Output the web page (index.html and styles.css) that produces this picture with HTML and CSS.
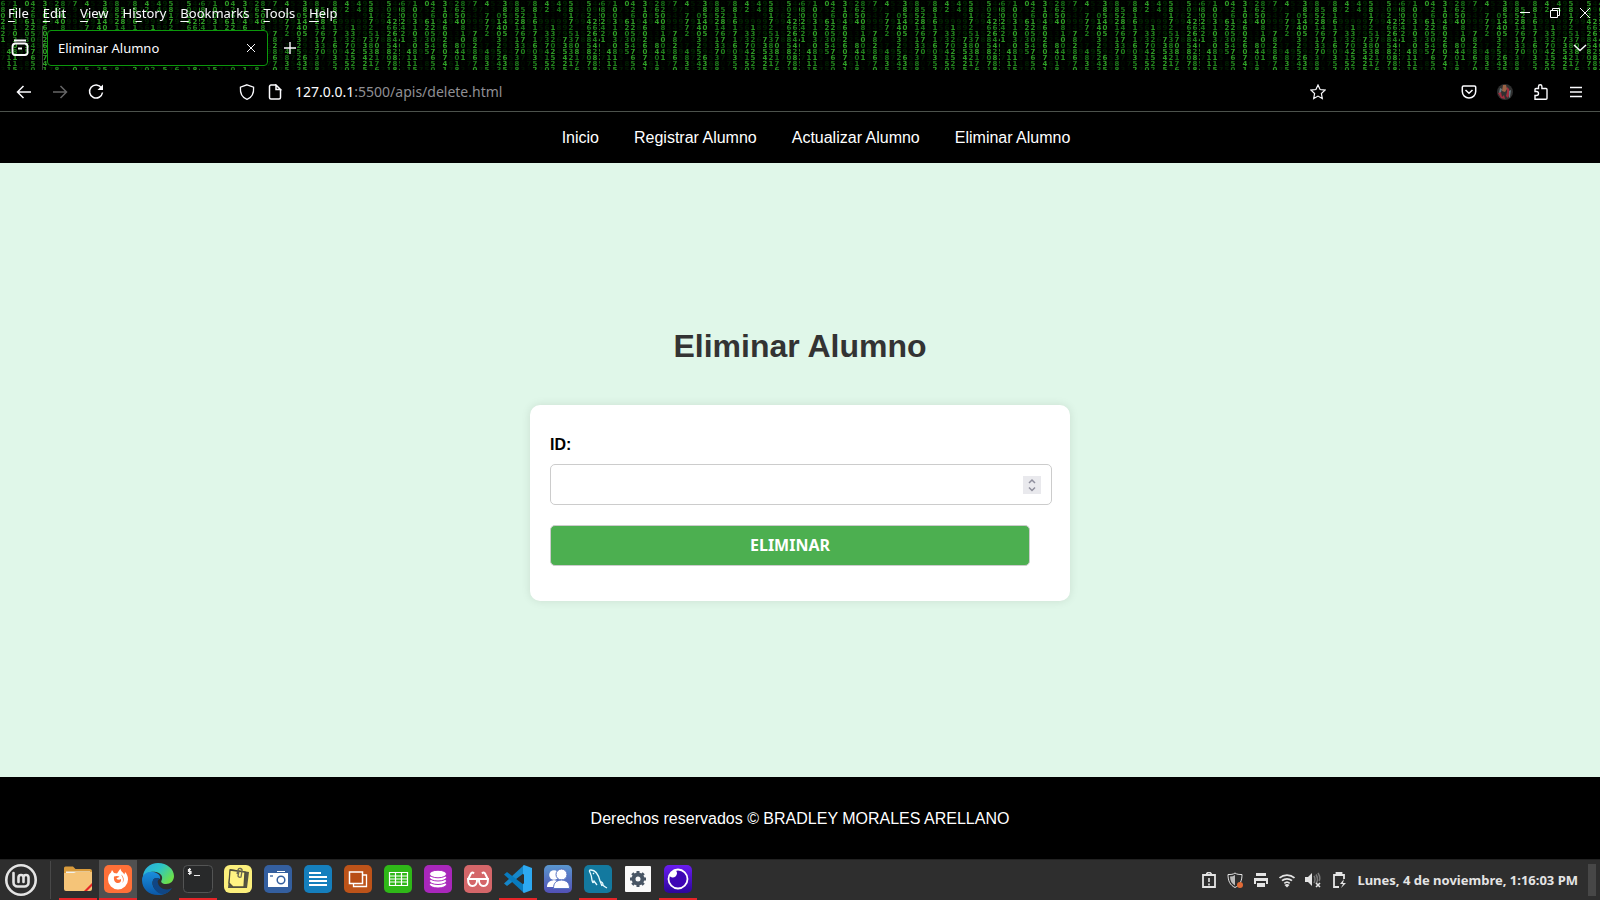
FILE: index.html
```html
<!DOCTYPE html>
<html lang="es">
<head>
<meta charset="utf-8">
<title>Eliminar Alumno</title>
<link rel="stylesheet" href="styles.css">
</head>
<body>
<header class="browser">
  <div class="theme">
    <canvas class="rain" aria-hidden="true"></canvas>
    <div class="menubar">
      <nav class="menus">
        <button><u>F</u>ile</button><button><u>E</u>dit</button><button><u>V</u>iew</button><button>Hi<u>s</u>tory</button><button><u>B</u>ookmarks</button><button><u>T</u>ools</button><button><u>H</u>elp</button>
      </nav>
      <div class="window-controls">
        <button aria-label="Minimize"><svg width="12" height="12" viewBox="0 0 12 12"><path d="M1 5.500h10"/></svg></button>
        <button aria-label="Restore"><svg width="12" height="12" viewBox="0 0 12 12"><path d="M1.500 3.500h7v7h-7zM3.500 3.500v-2h7v7h-2"/></svg></button>
        <button aria-label="Close"><svg width="12" height="12" viewBox="0 0 12 12"><path d="M1 1l10 10M11 1L1 11"/></svg></button>
      </div>
    </div>
    <div class="tabs">
      <button class="view" aria-label="Firefox View"><svg width="18" height="18" viewBox="0 0 18 18"><path stroke-width="1.800" d="M3 1.500h12M4 4.500h10a3 3 0 0 1 2.500 3v6a2.500 2.500 0 0 1-2.500 2.500H4A2.500 2.500 0 0 1 1.500 13.500v-6A3 3 0 0 1 4 4.500zM7 9.500h4"/></svg></button>
      <div class="tab"><span>Eliminar Alumno</span><button aria-label="Close tab"><svg width="10" height="10" viewBox="0 0 10 10"><path d="M1 1l8 8M9 1L1 9"/></svg></button></div>
      <button class="new-tab" aria-label="New tab"><svg width="14" height="14" viewBox="0 0 14 14"><path stroke-width="1.400" d="M7 1v12M1 7h12"/></svg></button>
      <button class="all-tabs" aria-label="List all tabs"><svg width="14" height="8" viewBox="0 0 14 8"><path stroke-width="1.500" d="M1 1l6 5.500L13 1"/></svg></button>
    </div>
  </div>
  <div class="toolbar">
    <div class="history">
      <button aria-label="Back"><svg width="16" height="16" viewBox="0 0 16 16"><path stroke-width="1.500" d="M15 8H1.500M7.500 2L1.500 8l6 6"/></svg></button>
      <button class="off" aria-label="Forward"><svg width="16" height="16" viewBox="0 0 16 16"><path stroke-width="1.500" d="M1 8h13.500M8.500 2l6 6-6 6"/></svg></button>
      <button aria-label="Reload"><svg width="16" height="16" viewBox="0 0 16 16"><path stroke-width="1.500" d="M13.500 4A6.500 6.500 0 1 0 14.500 8.500"/><path fill="currentColor" stroke="none" d="M15 .500v5.500H9.500z"/></svg></button>
    </div>
    <div class="address">
      <svg width="16" height="16" viewBox="0 0 16 16"><path stroke-width="1.300" d="M8 .800L14.600 3.200C15 9 13 13.500 8 15.300 3 13.500 1 9 1.400 3.200z"/></svg>
      <svg width="16" height="16" viewBox="0 0 16 16"><path stroke-width="1.500" d="M9 1H4a1.500 1.500 0 0 0-1.500 1.500v11A1.500 1.500 0 0 0 4 15h8a1.500 1.500 0 0 0 1.500-1.500V5.500zM9 1v4.500h4.500z"/></svg>
      <span class="url"><b>127.0.0.1</b>:5500/apis/delete.html</span>
      <button class="star" aria-label="Bookmark this page"><svg width="16" height="16" viewBox="0 0 16 16"><path stroke-width="1.200" d="M8 1l2.100 4.500 4.900.600-3.600 3.400.900 5L8 12.100 3.700 14.500l.900-5L1 6.100l4.900-.600z"/></svg></button>
    </div>
    <div class="tools">
      <button aria-label="Pocket"><svg width="16" height="16" viewBox="0 0 16 16"><path stroke-width="1.500" d="M2.500 2h11a1.200 1.200 0 0 1 1.200 1.200V7.500a6.700 6.500 0 0 1-13.400 0V3.200A1.200 1.200 0 0 1 2.500 2zM4.500 6L8 9.300 11.500 6"/></svg></button>
      <button aria-label="Account"><svg width="16" height="16" viewBox="0 0 16 16"><g stroke="none"><circle cx="8" cy="8" r="8" fill="#303030"/><path fill="#9c6245" d="M6 1h3l1 4-2 3-3-1z"/><path fill="#a12d3d" d="M1 9l3-1 1 5 2-2 1 4-4-1zM10 3l2 2 1 4-2 5-2-2 1-4z"/><path fill="#687b80" d="M3 4l2 1-1 3-2 1zM12 7l2-1-1 7-1 1z"/></g></svg></button>
      <button aria-label="Extensions"><svg width="16" height="16" viewBox="0 0 16 16"><path stroke-width="1.400" d="M2 15.200V11.500H3.500a2 2 0 0 0 0-4H2V5.500A1 1 0 0 1 3 4.500H5.500V2.500a1.700 1.700 0 0 1 3.400 0v2H13a1 1 0 0 1 1 1V14.200a1 1 0 0 1-1 1z"/></svg></button>
      <button aria-label="Application menu"><svg width="14" height="12" viewBox="0 0 14 12"><path stroke-width="1.500" d="M1 1.500h12M1 6h12M1 10.500h12"/></svg></button>
    </div>
  </div>
</header>

<nav class="site-nav">
  <a href="#">Inicio</a><a href="#">Registrar Alumno</a><a href="#">Actualizar Alumno</a><a href="#">Eliminar Alumno</a>
</nav>
<main class="content">
  <h1>Eliminar Alumno</h1>
  <form class="card">
    <label for="id">ID:</label>
    <div class="field">
      <input id="id" type="number">
      <svg class="spinner" width="18" height="18" viewBox="0 0 18 18"><path d="M6 7l3-3 3 3M6 11.500l3 3 3-3"/></svg>
    </div>
    <button class="submit" type="button">ELIMINAR</button>
  </form>
</main>
<footer class="site-footer">Derechos reservados © BRADLEY MORALES ARELLANO</footer>

<div class="taskbar">
  <button class="mint" aria-label="Menu"><svg width="34" height="34" viewBox="0 0 34 34"><circle cx="17" cy="17" r="14.700" stroke="#e4e4e4" stroke-width="2.600"/><path stroke="#e4e4e4" stroke-width="2.600" stroke-linecap="round" d="M9.500 10v9.500a4 4 0 0 0 4 4h7a4 4 0 0 0 4-4V14.500a2.500 2.500 0 0 0-5 0v4.500M19.500 14.500a2.500 2.500 0 0 0-5 0v4.500"/></svg></button>
  <div class="apps">
    <button class="app open" aria-label="Files"><svg width="28" height="28" viewBox="0 0 28 28"><path fill="#d99b3c" d="M0 3a1.500 1.500 0 0 1 1.500-1.500H9L11.500 4H26a2 2 0 0 1 2 2v18H0z"/><path fill="#f2f2ec" d="M2 6.500h24v4H2z"/><path fill="#f5c478" d="M0 8h10l2-1h16v17a2 2 0 0 1-2 2H2a2 2 0 0 1-2-2z"/><path fill="#e52527" d="M28 18v3l-5 5h-3z"/></svg></button>
    <button class="app open active" aria-label="Firefox"><svg width="28" height="28" viewBox="0 0 28 28"><rect width="28" height="28" rx="5" fill="#ff7038"/><path fill="#fff" d="M8 5l2 3 3 .500L16.500 3.500c0 3 2.500 3.500 4 6l.500-2.500c2 2 3 4.500 3 7.500A10 10 0 0 1 4 14.500c0-3.500 1-5.500 3-7z"/><path fill="#ff7038" d="M10 11.500q3-1 5.500 0c-1 1.500-3 1-3 2 1 1.500 3 1.500 4.500.500.500 2.500-1 4-3 4-3 0-4.500-2.500-4-6.500zM17 9.500c3 2 3.500 6 1.500 8.500 1-3 .500-6-1.500-8.500z"/></svg></button>
    <button class="app" aria-label="Edge"><svg width="32" height="32" viewBox="0 0 32 32"><defs><linearGradient id="edge-a" x1="0" y1="0" x2="1" y2=".600"><stop offset="0" stop-color="#2aa9e0"/><stop offset=".500" stop-color="#2cc4c8"/><stop offset="1" stop-color="#6be04c"/></linearGradient><linearGradient id="edge-b" x1="0" y1="0" x2="0" y2="1"><stop offset="0" stop-color="#1a8fdc"/><stop offset="1" stop-color="#0b58a8"/></linearGradient></defs><path fill="url(#edge-a)" d="M1 14C1 6 8 0 16 0c9 0 16 6 16 13 0 5-3.500 8-8 8-4 0-5.500-2-4.500-3.500C21.500 14 19 10 14 9 8 8 3 11 1 14z"/><path fill="url(#edge-b)" d="M0 17c0-6 6-9 11-8 5 .500 8 4 7 7-5-3-9 1-7 7 3 7 12 8 18 3-3 4-7 6-13 6C7 32 0 26 0 17z"/><path fill="#104684" d="M11 17c-2 7 4 15 11 14 4-1 7-4 8-6-5 3-13 1-14-5-1-2 1-4 2-4-3-2-6-1-7 1z"/></svg></button>
    <button class="app open" aria-label="Terminal"><svg width="30" height="28" viewBox="0 0 30 28"><rect x=".500" y=".500" width="29" height="27" rx="4" fill="#28292a" stroke="#535454"/><path stroke="#eee" stroke-width="1.200" d="M8 4.500H5.500v2H8v2H5M6.700 3v7M11 10.500h6"/></svg></button>
    <button class="app" aria-label="Notes"><svg width="28" height="28" viewBox="0 0 28 28"><rect width="28" height="28" rx="6" fill="#fbef7c"/><path fill="#555444" d="M6 4l19 3-2 16H4z"/><path fill="#fff383" stroke="#4e4d3c" stroke-width="1.300" d="M6 5l15 2-1 15H9l-4-4z"/><path stroke="#6b6954" stroke-width="1.300" d="M13 9l1-4a2 2 0 0 1 4 1l-1 6a2 2 0 0 1-3-1l1-5"/></svg></button>
    <button class="app" aria-label="Screenshot"><svg width="28" height="28" viewBox="0 0 28 28"><rect width="28" height="28" rx="5" fill="#345f9f"/><path fill="#fff" d="M13 6h8v1h-8zM4 8h20v14H4z"/><path stroke="#345f9f" stroke-width="1.300" d="M6 11h3"/><circle cx="17" cy="15" r="3.800" stroke="#345f9f" stroke-width="1.500"/></svg></button>
    <button class="app" aria-label="Text editor"><svg width="28" height="28" viewBox="0 0 28 28"><rect width="28" height="28" rx="5" fill="#157fbd"/><path stroke="#fff" stroke-width="2" d="M5 8h12M5 12h18M5 16h18M5 20h18"/></svg></button>
    <button class="app" aria-label="Windows"><svg width="28" height="28" viewBox="0 0 28 28"><rect width="28" height="28" rx="5" fill="#bd5319"/><path stroke="#fff" stroke-width="1.300" d="M9.500 10h13v11.500h-13z"/><path fill="#b84d15" stroke="#fff" stroke-width="1.500" d="M5.500 7h13v11.500h-13z"/></svg></button>
    <button class="app" aria-label="Spreadsheet"><svg width="28" height="28" viewBox="0 0 28 28"><rect width="28" height="28" rx="5" fill="#2fb818"/><path stroke="#fff" stroke-width="1.200" d="M5.500 7.500h18v13h-18zM5.500 11h18M5.500 14h18M5.500 17h18M11.500 7.500v13M17.500 7.500v13"/></svg></button>
    <button class="app" aria-label="Database"><svg width="28" height="28" viewBox="0 0 28 28"><rect width="28" height="28" rx="5" fill="#a927bb"/><g fill="#fff" stroke="#a927bb"><ellipse cx="14" cy="19.500" rx="8.500" ry="3.500"/><ellipse cx="14" cy="16" rx="8.500" ry="3.500"/><ellipse cx="14" cy="12.500" rx="8.500" ry="3.500"/><ellipse cx="14" cy="9" rx="8.500" ry="3.800"/></g></svg></button>
    <button class="app" aria-label="Reader"><svg width="28" height="28" viewBox="0 0 28 28"><rect width="28" height="28" rx="5" fill="#d46669"/><g stroke="#fff" stroke-width="2"><path d="M4 14h9c.500 5-2 7-4.500 7S4 19 4 14zM15 14h9c0 5-2 7-4.500 7S14.500 19 15 14zM12.500 15.500q1.500-1.500 3 0M4 14.500l3-6q1-2 3 0M24 14.500l-3-6q-1-2-3 0"/></g></svg></button>
    <button class="app open" aria-label="Visual Studio Code"><svg width="28" height="28" viewBox="0 0 28 28"><path fill="#1687ca" d="M20 0v8L3 21 0 18.500z"/><path fill="#087bbf" d="M0 9.500L3 7l17 13v8z"/><path fill="#2da9f2" d="M20 0l8 3v22l-8 3-1-1V1z"/><path fill="#2e2e2e" d="M20 9v10l-7-5z"/></svg></button>
    <button class="app" aria-label="Users"><svg width="28" height="28" viewBox="0 0 28 28"><defs><linearGradient id="people" x1="0" y1="0" x2="0" y2="1"><stop stop-color="#5a96cf"/><stop offset="1" stop-color="#5250b6"/></linearGradient></defs><rect width="28" height="28" rx="5" fill="url(#people)"/><g fill="#fff"><circle cx="10" cy="10" r="4.800"/><path d="M3 22c0-5 3-6 7-7 4 1 6 2 6 7z"/></g><g fill="#fff" stroke="#5672c1"><circle cx="17.500" cy="9.500" r="5.500"/><path d="M9.500 23.500c0-6 3-8 8-8.500 5 .500 8 2.500 8 8.500z"/></g></svg></button>
    <button class="app open" aria-label="MySQL Workbench"><svg width="28" height="28" viewBox="0 0 28 28"><rect width="28" height="28" rx="5" fill="#13799f"/><path stroke="#e7fbff" stroke-width="1.300" d="M9 18c-2-4-1-6-2-8-1-3-3-5 0-5 6 0 8 7 9 11 2 1 3 2 3 3-1 1 2 3 4 4M9 18l1-2 3 4M9 8l1 1M16 16l2 5"/></svg></button>
    <button class="app" aria-label="Settings"><svg width="26" height="26" viewBox="0 0 26 26"><rect width="26" height="26" rx="1" fill="#fafafa"/><circle cx="13" cy="13" r="4.500" stroke="#485564" stroke-width="4"/><path stroke="#485564" stroke-width="3" d="M13 5v3M13 18v3M5 13h3M18 13h3M7.300 7.300l2 2M16.700 16.700l2 2M7.300 18.700l2-2M16.700 9.300l2-2"/></svg></button>
    <button class="app open" aria-label="Insomnia"><svg width="28" height="28" viewBox="0 0 28 28"><defs><linearGradient id="night" x1="0" y1="0" x2="0" y2="1"><stop stop-color="#6a1cf0"/><stop offset="1" stop-color="#2c069c"/></linearGradient></defs><rect width="28" height="28" rx="5" fill="url(#night)"/><circle cx="14" cy="14" r="9.500" fill="#3e06b5" stroke="#fff" stroke-width="1.800"/><path fill="#fff" d="M5.500 11A4 4 0 1 0 12 5.500C8 6 6 8 5.500 11z"/></svg></button>
  </div>
  <div class="tray">
    <svg width="16" height="16" viewBox="0 0 16 16"><path stroke-width="1.800" d="M2 3h12v12H2z"/><path stroke-width="1.600" d="M5.500 3a2.500 2.500 0 0 1 5 0M8 6v4M8 11.500v2"/></svg>
    <svg width="16" height="16" viewBox="0 0 16 16"><path d="M8 1c2 1.500 4 1.500 7 1.500C15 9 13 13 8 15.500 3 13 1 9 1 2.500 4 2.500 6 2.500 8 1z"/><path fill="#bbb" stroke="none" d="M8 3v10.500C5 12 3 9 3 4.500q3 0 5-1.500z"/><circle cx="13" cy="13" r="3" fill="#e06a36" stroke="none"/></svg>
    <svg width="16" height="16" viewBox="0 0 16 16"><path fill="currentColor" stroke="none" d="M3 1h10v3H3zM1 6h14v6h-2v-3H3v3H1zM4 11h8v4H4z"/></svg>
    <svg width="16" height="16" viewBox="0 0 16 16"><path stroke-width="1.700" d="M.500 6a11 11 0 0 1 15 0M3 8.700a7.500 7.500 0 0 1 10 0M5.300 11.300a4 4 0 0 1 5.400 0"/><path fill="currentColor" stroke="none" d="M8 15.500L5.500 13q2.500-2 5 0z"/></svg>
    <svg width="16" height="16" viewBox="0 0 16 16"><path fill="currentColor" stroke="none" d="M0 5h3l4-4v13l-4-4H0z"/><path stroke="#777" stroke-width="1.500" d="M9 4q2 3 0 7M11 2.500q3 5 0 9M13 1q3 5 1 8"/><path stroke-width="1.600" d="M11 11l4 4M15 11l-4 4"/></svg>
    <svg width="16" height="16" viewBox="0 0 16 16"><path stroke-width="1.800" d="M8 15H3V3h10v4M5.500 3V1h5v2"/><path fill="currentColor" stroke="none" d="M13 7l-4 5h3l-2 4 5-5h-3z"/></svg>
    <time>Lunes, 4 de noviembre, 1:16:03 PM</time>
    <button class="desktop" aria-label="Show desktop"></button>
  </div>
</div>
<script src="rain.js"></script>
</body>
</html>
```

FILE: styles.css
```css
* { box-sizing: border-box; }
body {
  margin: 0;
  min-height: 100vh;
  display: flex;
  flex-direction: column;
  background: #e0f7e9;
  font-family: "Liberation Sans", Arial, sans-serif;
  font-size: 16px;
}
button {
  padding: 0;
  border: 0;
  background: none;
  color: inherit;
  font: inherit;
}
svg { display: block; fill: none; stroke: currentColor; }

.browser {
  background: #000;
  color: #fbfbfe;
  font: 13px "Noto Sans", "Open Sans", sans-serif;
  border-bottom: 1px solid #4c524c;
}
.browser button, .tray button { display: grid; place-items: center; }
.theme { position: relative; }
.rain { position: absolute; inset: 0; width: 100%; height: 100%; }
.menubar, .tabs { position: relative; display: flex; }
.menubar { height: 26px; justify-content: space-between; }
.menus { display: flex; gap: 14px; padding-left: 8px; }
.browser .menus button { display: block; }
.menus u { text-underline-offset: 3px; }
.window-controls { display: flex; gap: 18px; padding-right: 9px; }
.tabs { height: 44px; align-items: center; padding-right: 13px; }
.view { width: 43px; height: 44px; padding-right: 3px; border-right: 1px solid #3c413c; }
.tab {
  width: 221px;
  height: 36px;
  margin-left: 4px;
  padding: 0 11px 0 10px;
  display: flex;
  align-items: center;
  justify-content: space-between;
  background: #000;
  border: 1px solid #0b980b;
  border-radius: 4px;
}
.new-tab { margin-left: 15px; }
.all-tabs { margin-left: auto; }
.toolbar { height: 41px; display: flex; align-items: center; padding: 2px 17px 0 16px; }
.history, .tools { display: flex; align-items: center; gap: 20px; }
.off { opacity: .4; }
.address { flex: 1; display: flex; align-items: center; gap: 12px; margin: 0 135px; }
.url { color: #8f8f94; font-size: 14px; }
.url b { color: #fbfbfe; font-weight: 400; }
.star { margin-left: auto; }

.site-nav {
  height: 51px;
  padding-left: 32px;
  display: flex;
  align-items: center;
  justify-content: center;
  gap: 35px;
  background: #000;
}
.site-nav a { color: #fff; text-decoration: none; }
.content {
  flex: 1;
  display: flex;
  flex-direction: column;
  align-items: center;
  justify-content: center;
  padding-bottom: 12px;
  background: #e0f7e9;
}
h1 { margin: 0 0 40px; color: #333; font-size: 32px; line-height: 38px; }
.card {
  width: 100%;
  max-width: 540px;
  padding: 30px 18px 35px 20px;
  background: #fff;
  border-radius: 10px;
  box-shadow: 0 0 10px rgba(0, 0, 0, .1);
}
.card label { display: block; margin-bottom: 10px; font-weight: 700; line-height: 19px; }
.field { position: relative; margin-bottom: 20px; }
.field input {
  display: block;
  width: 100%;
  height: 41px;
  padding: 10px 36px 10px 10px;
  border: 1px solid #ccc;
  border-radius: 5px;
  font: inherit;
  appearance: textfield;
}
.field input::-webkit-inner-spin-button { appearance: none; }
.spinner { position: absolute; right: 11px; top: 12px; background: #e9e9ed; stroke: #8f8f9d; stroke-width: 1.5; }
.submit {
  display: block;
  width: calc(100% - 22px);
  height: 41px;
  padding-bottom: 2px;
  background: #4caf50;
  color: #fff;
  border: 1px solid #ccc;
  border-radius: 5px;
  font: 700 16px "Noto Sans", "Open Sans", sans-serif;
}
.site-footer {
  height: 82px;
  padding-top: 2px;
  display: grid;
  place-items: center;
  background: #000;
  color: #fff;
}

.taskbar {
  height: 41px;
  display: flex;
  align-items: center;
  background: #2e2e2e;
  border-top: 1px solid #222;
  color: #e4e4e4;
}
.mint { padding-left: 4px; padding-right: 12px; border-right: 1px solid #484848; height: 38px; }
.apps { display: flex; gap: 2px; padding-left: 8px; height: 100%; }
.app { width: 38px; display: grid; place-items: center; border-bottom: 2px solid transparent; }
.app svg { stroke: none; }
.open { border-color: #e62428; }
.active { background: #505050; }
.tray { margin-left: auto; display: flex; align-items: center; gap: 10px; padding-right: 4px; }
.tray time { font: 700 13px "Noto Sans", "Open Sans", sans-serif; }
.desktop { width: 8px; height: 32px; background: #474747; }
```

FILE: rain.js
```js
// Digital rain: a 200px tile of digits on a 6px grid, one string per column.
const columns = [
  "6802421     ", "        4111", "100310308115", "", "0  620355   ", "426125047650",
  "", "310460260741", "", "2654   84018", "8200810041  ", "", "7    7828670",
  "", "4 7772  4835", "", "  0140325243", "385405   635", "", "885217137388",
  " 52846730   ", "", "881617160352", "", "42   3374150", "    13202522",
  "44          ", "      735425", "58172538321 ", "     1708176", "", "502462858071",
  "   266442888", "465537405254"
];
const canvas = document.querySelector(".rain");
const tile = document.createElement("canvas");
tile.width = 200;
tile.height = 72;
const pen = tile.getContext("2d");
pen.font = "bold 7px 'DejaVu Sans'";
pen.textAlign = "center";
columns.forEach((column, x) => {
  for (let y = 0; y < 12; y++) {
    const digit = column[y];
    const lit = digit && digit !== " ";
    const seed = (x * 37 + y * 53 + x * y * 11) % 10;
    pen.fillStyle = lit ? `rgb(${20 + seed * 3}, ${105 + seed * 6}, ${20 + seed * 2})` : `rgb(0, ${8 + seed * 3}, 0)`;
    pen.fillText(lit ? digit : seed, x * 6 + 3, y * 6 + 6);
  }
});
function paint() {
  canvas.width = canvas.clientWidth;
  canvas.height = canvas.clientHeight;
  const ctx = canvas.getContext("2d");
  ctx.fillStyle = "#000";
  ctx.fillRect(0, 0, canvas.width, canvas.height);
  ctx.fillStyle = ctx.createPattern(tile, "repeat");
  ctx.fillRect(0, 0, canvas.width, canvas.height);
}
paint();
window.addEventListener("resize", paint);
```
